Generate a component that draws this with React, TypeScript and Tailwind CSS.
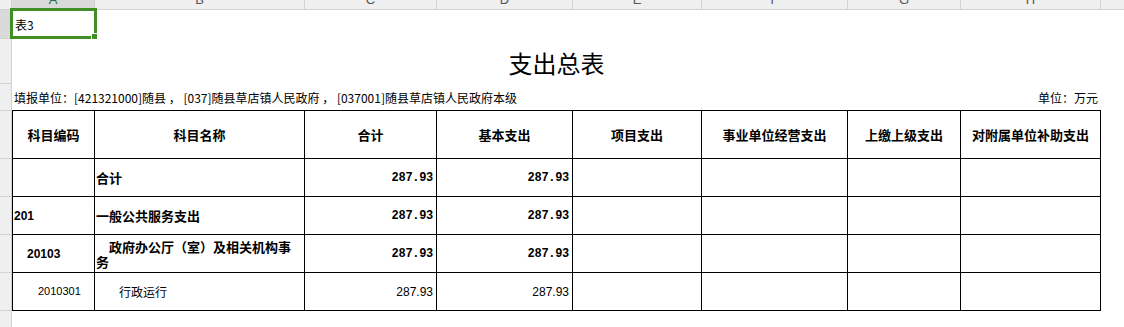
import React from 'react';

const cols = [
  { letter: 'A', w: 'w-[83px]' },
  { letter: 'B', w: 'w-[210px]' },
  { letter: 'C', w: 'w-[132px]' },
  { letter: 'D', w: 'w-[136px]' },
  { letter: 'E', w: 'w-[129px]' },
  { letter: 'F', w: 'w-[146px]' },
  { letter: 'G', w: 'w-[113px]' },
  { letter: 'H', w: 'w-[140px]' },
];

const rowHeads = [
  'h-[29px] bg-[#d9d9d9]',
  'h-[45px]',
  'h-[27px]',
  'h-[48px]',
  'h-[38px]',
  'h-[38px]',
  'h-[38px]',
  'h-[38px]',
];

const headers = ['科目编码', '科目名称', '合计', '基本支出', '项目支出', '事业单位经营支出', '上缴上级支出', '对附属单位补助支出'];

interface Row {
  code: string;
  name: string;
  total: string;
  basic: string;
  bold: boolean;
  codeClass: string;
  nameClass: string;
}

const rows: Row[] = [
  { code: '', name: '合计', total: '287.93', basic: '287.93', bold: true, codeClass: '', nameClass: 'pl-[1px]' },
  { code: '201', name: '一般公共服务支出', total: '287.93', basic: '287.93', bold: true, codeClass: 'pl-[1px]', nameClass: 'pl-[1px]' },
  {
    code: '20103',
    name: '政府办公厅（室）及相关机构事务',
    total: '287.93',
    basic: '287.93',
    bold: true,
    codeClass: 'pl-[14px]',
    nameClass: 'pl-[1px] pr-[6px] indent-[13px] leading-[15px]',
  },
  { code: '2010301', name: '行政运行', total: '287.93', basic: '287.93', bold: false, codeClass: 'pl-[25px]', nameClass: 'pl-[24px]' },
];

const cjk = "font-['Noto_Sans_CJK_SC','Noto_Sans_CJK_JP',sans-serif]";

export default function App() {
  return (
    <div className={`relative w-[1124px] h-[327px] overflow-hidden bg-white text-black ${cjk}`}>
      {/* column header bar, mostly scrolled off the top */}
      <div className="flex h-[10px] bg-[#efefef] border-b border-[#d2d2d2] overflow-hidden">
        <div className="w-[12px] shrink-0 border-r border-[#d2d2d2]" />
        {cols.map((c, i) => (
          <div
            key={c.letter}
            className={`${c.w} shrink-0 border-r border-[#d2d2d2] overflow-hidden ${i === 0 ? 'bg-[#dadada] text-[#217346]' : 'text-[#555]'}`}
          >
            <div className="h-[20px] -mt-[10px] flex items-center justify-center text-[13px] font-['Liberation_Sans',sans-serif]">
              {c.letter}
            </div>
          </div>
        ))}
        <div className="flex-1" />
      </div>

      <div className="flex">
        {/* row header strip */}
        <div className="w-[12px] shrink-0 h-[317px] bg-[#efefef] border-r border-[#d2d2d2] flex flex-col">
          {rowHeads.map((h, i) => (
            <div key={i} className={`${h} shrink-0 border-b border-[#d2d2d2]`} />
          ))}
        </div>

        <div className="w-[1089px] flex flex-col">
          <div className="h-[29px] flex items-center pl-[3px] text-[12px]">表3</div>
          <div className="h-[45px] flex items-center justify-center pt-[3px] text-[24px] leading-none">支出总表</div>
          <div className="h-[26px] flex items-center justify-between pl-[2px] pr-[3px] pt-[1px] text-[12px]">
            <span>填报单位：[421321000]随县 ， [037]随县草店镇人民政府 ， [037001]随县草店镇人民政府本级</span>
            <span>单位：万元</span>
          </div>

          <table className="table-fixed border-separate border-spacing-0 w-[1089px] text-[13px]">
            <colgroup>
              {cols.map((c) => (
                <col key={c.letter} className={c.w} />
              ))}
            </colgroup>
            <thead>
              <tr>
                {headers.map((h, i) => (
                  <th
                    key={h}
                    className={`h-[49px] p-0 border-t border-r border-b border-black font-bold text-center ${i === 0 ? 'border-l' : ''}`}
                  >
                    {h}
                  </th>
                ))}
              </tr>
            </thead>
            <tbody>
              {rows.map((r, i) => {
                const weight = r.bold ? 'font-bold' : 'font-normal';
                const num = r.bold
                  ? "font-['Liberation_Mono',monospace] font-bold text-[12px] tracking-[-0.3px]"
                  : "font-['Liberation_Sans',sans-serif] text-[12px]";
                return (
                  <tr key={i}>
                    <td
                      className={`h-[38px] p-0 border-l border-r border-b border-black ${r.codeClass} ${
                        r.bold ? "font-['Liberation_Sans',sans-serif] font-bold text-[12px]" : "font-['Liberation_Sans',sans-serif] text-[11px]"
                      }`}
                    >
                      {r.code}
                    </td>
                    <td className={`p-0 border-r border-b border-black ${weight} ${r.bold ? 'text-[13px]' : 'text-[12px]'} ${r.nameClass}`}>
                      {r.name}
                    </td>
                    <td className={`p-0 pr-[3px] border-r border-b border-black text-right ${num}`}>{r.total}</td>
                    <td className={`p-0 pr-[3px] border-r border-b border-black text-right ${num}`}>{r.basic}</td>
                    <td className="p-0 border-r border-b border-black" />
                    <td className="p-0 border-r border-b border-black" />
                    <td className="p-0 border-r border-b border-black" />
                    <td className="p-0 border-r border-b border-black" />
                  </tr>
                );
              })}
            </tbody>
          </table>
        </div>
      </div>

      {/* active cell selection on A1 */}
      <div className="absolute left-[10px] top-[8px] w-[87px] h-[31px] border-[3px] border-[#3f8f25]" />
      <div className="absolute left-[91px] top-[33px] w-[7px] h-[7px] bg-[#3f8f25] border border-white" />
    </div>
  );
}
